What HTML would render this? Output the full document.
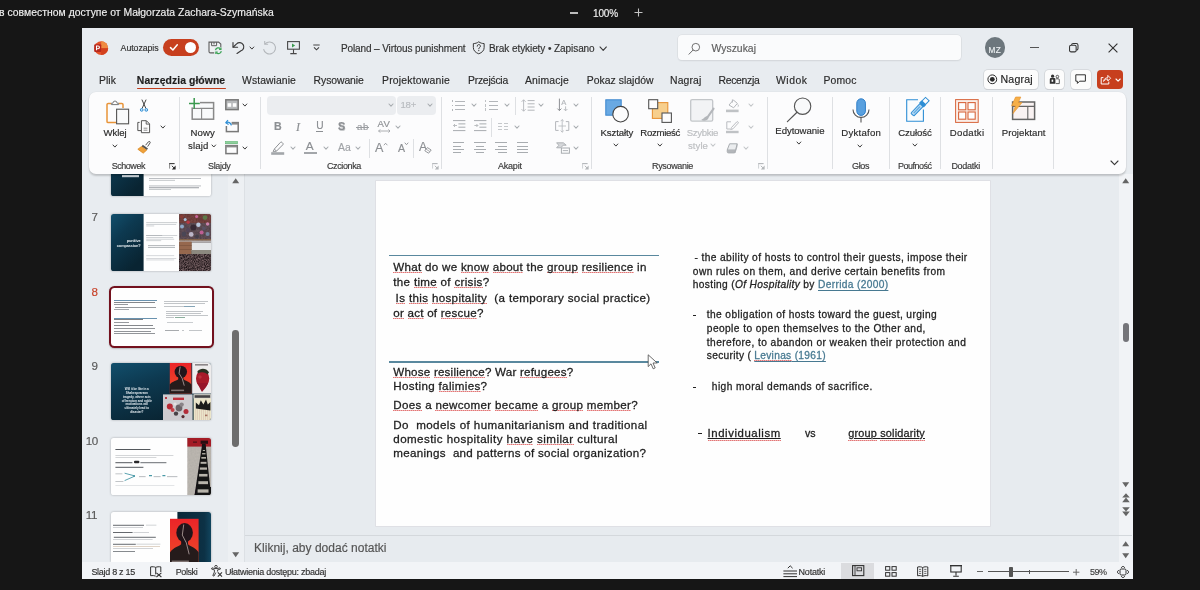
<!DOCTYPE html>
<html><head><meta charset="utf-8">
<style>
*{margin:0;padding:0;box-sizing:border-box}
html,body{width:1200px;height:590px;overflow:hidden;background:#161616}
body{font-family:"Liberation Sans",sans-serif;position:relative;color:#222}
.a{position:absolute}
.t{position:absolute;white-space:nowrap;line-height:1;-webkit-text-stroke-width:.16px}
svg{overflow:visible}
.w{background:linear-gradient(90deg,rgba(222,84,84,.8) 55%,rgba(222,84,84,.45) 55%) 0 100%/2px 1.2px repeat-x;padding-bottom:.4px}
.u{text-decoration:underline;text-decoration-thickness:.9px;text-underline-offset:.8px}
.w2{padding-bottom:1.8px}
.i{font-style:italic}
.lk{color:#487a92;text-decoration:underline;text-decoration-thickness:.8px;text-underline-offset:1.5px}
#root{position:absolute;left:0;top:0;width:1200px;height:590px;will-change:transform;opacity:.999}
</style></head><body><div id="root">
<div class="t" style="left:-1.0px;top:8px;font-size:10.4px;color:#f0f0f0;letter-spacing:0.024px;">в совместном доступе от Małgorzata Zachara-Szymańska</div>
<div class="a" style="left:570.0px;top:12.4px;width:8.4px;height:1.3px;background:#bdbdbd;"></div>
<div class="t" style="left:593.0px;top:9px;font-size:10px;color:#f0f0f0;letter-spacing:-0.144px;">100%</div>
<svg class="a" style="left:634.4px;top:8.4px;" width="9" height="9" viewBox="0 0 9 9" fill="none"><path d="M4.5 0.5V8.5M0.5 4.5H8.5" stroke="#c4c4c4" stroke-width="1.1"/></svg>
<div class="a" style="left:82.0px;top:28.0px;width:1050.6px;height:551.2px;background:#e9edf1;"></div>
<div class="a" style="left:245.0px;top:174.0px;width:887.0px;height:388.4px;background:#e8ecf0;"></div>
<div class="a" style="left:1119.0px;top:174.0px;width:13.6px;height:388.4px;background:#f2f4f7;"></div>
<div class="a" style="left:228.0px;top:174.0px;width:17.0px;height:388.4px;background:#eef1f4;"></div>
<div class="a" style="left:244.4px;top:174.0px;width:0.8px;height:388.4px;background:#dde1e5;"></div>
<svg class="a" width="0" height="0"><defs>
<linearGradient id="teal" x1="0" y1="0" x2=".55" y2="1"><stop offset="0" stop-color="#13506d"/><stop offset=".4" stop-color="#0e3a51"/><stop offset="1" stop-color="#0a2533"/></linearGradient>
<linearGradient id="redp" x1="0" y1="0" x2="0" y2="1"><stop offset="0" stop-color="#ec2529"/><stop offset=".55" stop-color="#ef3d2a"/><stop offset="1" stop-color="#e8572c"/></linearGradient>
<filter id="nz" color-interpolation-filters="sRGB" x="0" y="0" width="100%" height="100%"><feTurbulence type="fractalNoise" baseFrequency="1.1" numOctaves="2" seed="4"/><feColorMatrix type="matrix" values="0.7 0 0 0 -0.05  0.6 0 0 0 -0.06  0.6 0 0 0 -0.05  0 0 0 0 1"/><feGaussianBlur stdDeviation=".35"/></filter>
<filter id="nz2" color-interpolation-filters="sRGB" x="0" y="0" width="100%" height="100%"><feTurbulence type="fractalNoise" baseFrequency=".55" numOctaves="2" seed="9"/><feColorMatrix type="matrix" values="0.5 0 0 0 0.1  0.4 0 0 0 0.1  0.4 0 0 0 0.12  0 0 0 0 1"/></filter>
<filter id="b3"><feGaussianBlur stdDeviation=".35"/></filter>
<filter id="b6"><feGaussianBlur stdDeviation=".75"/></filter>
<clipPath id="r3"><rect x="0" y="0" width="100" height="57" rx="2.6"/></clipPath>
</defs></svg>
<svg class="a" style="left:111.1px;top:174px;filter:drop-shadow(0 .5px 1px rgba(0,0,0,.28));overflow:hidden;" width="100" height="22" viewBox="0 0 100 22"><g clip-path="url(#c6)"><defs><clipPath id="c6"><rect x="0" y="-10" width="100" height="32" rx="2.6"/></clipPath></defs><rect width="100" height="22" fill="#fff"/><rect y="-35" width="32.6" height="57" fill="url(#teal)"/><rect x="11" y="1" width="17" height="2.2" fill="#dfe7ec" opacity="0.9"/><rect x="38" y="4.2" width="52" height="0.7" fill="#9fa4a9" opacity="1"/><rect x="38" y="5.9" width="26" height="0.7" fill="#aeb3b7" opacity="1"/><rect x="38" y="11.6" width="52" height="0.7" fill="#9fa4a9" opacity="1"/><rect x="38" y="13.4" width="50" height="0.8" fill="#80858b" opacity="1"/><rect x="38" y="15.2" width="22" height="0.7" fill="#aeb3b7" opacity="1"/></g></svg>
<div class="t" style="left:91.6px;top:211px;font-size:11.6px;color:#5a5a5a;">7</div>
<div class="t" style="left:91.6px;top:286px;font-size:11.6px;color:#c9432a;">8</div>
<div class="t" style="left:91.6px;top:360px;font-size:11.6px;color:#5a5a5a;">9</div>
<div class="t" style="left:85.8px;top:435px;font-size:11.6px;color:#5a5a5a;letter-spacing:-0.452px;">10</div>
<div class="t" style="left:85.8px;top:509px;font-size:11.6px;color:#5a5a5a;letter-spacing:-0.321px;">11</div>
<svg class="a" style="left:111.1px;top:213.8px;filter:drop-shadow(0 .5px 1px rgba(0,0,0,.28));overflow:hidden;" width="100" height="57" viewBox="0 0 100 57"><g clip-path="url(#r3)"><rect width="100" height="57" fill="#fff"/><rect width="32.6" height="57" fill="url(#teal)"/><text x="29.6" y="28.2" font-size="3.9" font-weight="bold" fill="#e8eef2" text-anchor="end" font-family="Liberation Sans" letter-spacing="-.12">punitive</text><text x="29.6" y="33.4" font-size="3.9" font-weight="bold" fill="#e8eef2" text-anchor="end" font-family="Liberation Sans" letter-spacing="-.12">compassion?</text><rect x="35.2" y="8.4" width="31" height="0.7" fill="#b4b8bc" opacity="1"/><rect x="35.2" y="10" width="30" height="0.7" fill="#bfc3c7" opacity="1"/><rect x="35.2" y="11.6" width="8" height="0.7" fill="#bfc3c7" opacity="1"/><rect x="35.2" y="21.2" width="16" height="0.7" fill="#7f848a" opacity="1"/><rect x="35.2" y="21.2" width="31" height="0.7" fill="#bfc3c7" opacity="1"/><rect x="35.2" y="23.2" width="27" height="0.7" fill="#bfc3c7" opacity="1"/><rect x="35.2" y="24.8" width="28" height="0.7" fill="#bfc3c7" opacity="1"/><rect x="35.2" y="26.4" width="15" height="0.7" fill="#bfc3c7" opacity="1"/><rect x="37" y="31.4" width="27" height="0.7" fill="#8f9499" opacity="1"/><rect x="37" y="33.2" width="27" height="0.7" fill="#9da2a7" opacity="1"/><rect x="35.2" y="41.4" width="28" height="0.7" fill="#c6c9cd" opacity="1"/><rect x="35.2" y="44" width="30" height="0.7" fill="#c6c9cd" opacity="1"/><rect x="35.2" y="45.6" width="28" height="0.7" fill="#c6c9cd" opacity="1"/><g><rect x="68.2" y="0" width="31.8" height="26.4" fill="#5d4a52"/><rect x="68.2" y="0" width="31.8" height="9" fill="#7a3c34"/><rect x="68.2" y="0" width="31.8" height="26.4" filter="url(#nz2)" opacity=".3"/><g filter="url(#b6)"><circle cx="85.6" cy="2.4" r="1.5" fill="#c9659a"/><circle cx="96.6" cy="10" r="1.7" fill="#cf86b0"/><circle cx="90.6" cy="18.6" r="2.0" fill="#bf6094"/><circle cx="77.2" cy="8.2" r="1.7" fill="#b83a46"/><circle cx="74.2" cy="5.4" r="1.5" fill="#a9c3dd"/><circle cx="71" cy="12.4" r="2.0" fill="#8fa9c9"/><circle cx="87.4" cy="10.8" r="2.2" fill="#b9c7dc"/><circle cx="80.2" cy="20.4" r="2.4" fill="#bdb7c9"/><circle cx="82.4" cy="13.4" r="3" fill="#382c34"/><circle cx="73" cy="20" r="2.4" fill="#4b4656"/><circle cx="94" cy="3.6" r="2.4" fill="#5f7a48"/><circle cx="96.6" cy="20" r="2" fill="#76879f"/><circle cx="70.6" cy="2.6" r="1.6" fill="#8a3c36"/><circle cx="89" cy="5.6" r="2" fill="#6a3a3a"/><circle cx="77" cy="16" r="2.2" fill="#54465a"/><circle cx="93" cy="14.4" r="1.8" fill="#5a5266"/><circle cx="86" cy="22.4" r="2" fill="#45404c"/></g><rect x="68.2" y="25" width="31.8" height="1.5" fill="#8d6a48" opacity=".8"/></g><g><rect x="68.2" y="27.6" width="31.8" height="29.4" fill="#4a3d3e"/><rect x="80.4" y="28.4" width="19.6" height="8.6" fill="#e6e8ea"/><rect x="68.2" y="27.6" width="12.4" height="12.6" fill="#97694f"/><rect x="68.2" y="31" width="12.4" height="1" fill="#7d5540" opacity=".7"/><rect x="68.2" y="35" width="12.4" height="1" fill="#7d5540" opacity=".7"/><rect x="80.4" y="36" width="19.6" height="4.6" fill="#8d8a80" filter="url(#b3)"/><rect x="68.2" y="40" width="31.8" height="17" filter="url(#nz)"/></g></g></svg>
<div class="a" style="left:108.8px;top:286.2px;width:105px;height:61.8px;border-radius:5.5px;background:#fff;border:2.2px solid #74121f;box-shadow:0 .5px 1.5px rgba(0,0,0,.2)"><div class="a" style="left:3.4px;top:12.2px;width:43px;height:0.9px;background:#6a93b0"></div><div class="a" style="left:3.6px;top:14.2px;width:41px;height:0.8px;background:#85888c"></div><div class="a" style="left:3.6px;top:16px;width:14px;height:0.7px;background:#979a9e"></div><div class="a" style="left:4px;top:18.6px;width:41px;height:0.7px;background:#979a9e"></div><div class="a" style="left:3.6px;top:21.2px;width:15px;height:0.7px;background:#a5a8ac"></div><div class="a" style="left:3.4px;top:30px;width:43px;height:0.9px;background:#6a93b0"></div><div class="a" style="left:3.6px;top:31.2px;width:29px;height:0.8px;background:#7d8084"></div><div class="a" style="left:3.6px;top:33.4px;width:15px;height:0.7px;background:#979a9e"></div><div class="a" style="left:3.6px;top:36.4px;width:39px;height:0.8px;background:#85888c"></div><div class="a" style="left:3.6px;top:40.2px;width:41px;height:0.7px;background:#93969a"></div><div class="a" style="left:3.6px;top:42.6px;width:37px;height:0.7px;background:#93969a"></div><div class="a" style="left:3.6px;top:45px;width:41px;height:0.7px;background:#93969a"></div><div class="a" style="left:53.4px;top:12.6px;width:44px;height:0.6px;background:#c3c6c9"></div><div class="a" style="left:53px;top:15px;width:41px;height:0.6px;background:#c3c6c9"></div><div class="a" style="left:53px;top:17.8px;width:20px;height:0.6px;background:#c3c6c9"></div><div class="a" style="left:73px;top:17.8px;width:11.6px;height:0.8px;background:#86a5b7"></div><div class="a" style="left:55.2px;top:22.4px;width:37px;height:0.6px;background:#c3c6c9"></div><div class="a" style="left:55.2px;top:24.6px;width:35px;height:0.6px;background:#c3c6c9"></div><div class="a" style="left:55.2px;top:26.6px;width:42px;height:0.6px;background:#c3c6c9"></div><div class="a" style="left:55.2px;top:28.8px;width:8px;height:0.6px;background:#c3c6c9"></div><div class="a" style="left:64px;top:28.8px;width:10px;height:0.8px;background:#8db09e"></div><div class="a" style="left:56px;top:33.6px;width:26px;height:0.6px;background:#cbced1"></div><div class="a" style="left:54.6px;top:41.8px;width:13.6px;height:0.8px;background:#a9acaf"></div><div class="a" style="left:71.6px;top:41.8px;width:2px;height:0.6px;background:#c3c6c9"></div><div class="a" style="left:78.6px;top:41.8px;width:12.6px;height:0.7px;background:#c3c6c9"></div></div>
<svg class="a" style="left:111.1px;top:363px;filter:drop-shadow(0 .5px 1px rgba(0,0,0,.28));overflow:hidden;" width="100" height="57" viewBox="0 0 100 57"><g clip-path="url(#r3)"><rect width="100" height="57" fill="url(#teal)"/><text x="25.8" y="27.40" font-size="3.1" font-weight="bold" fill="#e3ebf0" text-anchor="middle" font-family="Liberation Sans" letter-spacing="-.05">Will it be like in a</text><text x="25.8" y="31.12" font-size="3.1" font-weight="bold" fill="#e3ebf0" text-anchor="middle" font-family="Liberation Sans" letter-spacing="-.05">Shakespearean</text><text x="25.8" y="34.84" font-size="3.1" font-weight="bold" fill="#e3ebf0" text-anchor="middle" font-family="Liberation Sans" letter-spacing="-.05">tragedy, where acts</text><text x="25.8" y="38.56" font-size="3.1" font-weight="bold" fill="#e3ebf0" text-anchor="middle" font-family="Liberation Sans" letter-spacing="-.05">of heroism and noble</text><text x="25.8" y="42.28" font-size="3.1" font-weight="bold" fill="#e3ebf0" text-anchor="middle" font-family="Liberation Sans" letter-spacing="-.05">motivations will</text><text x="25.8" y="46.00" font-size="3.1" font-weight="bold" fill="#e3ebf0" text-anchor="middle" font-family="Liberation Sans" letter-spacing="-.05">ultimately lead to</text><text x="25.8" y="49.72" font-size="3.1" font-weight="bold" fill="#e3ebf0" text-anchor="middle" font-family="Liberation Sans" letter-spacing="-.05">disaster?</text><rect x="58.8" y="0" width="21.6" height="30.6" fill="url(#redp)"/><g filter="url(#b3)"><ellipse cx="69.816" cy="8.874" rx="6.264" ry="6.120000000000001" fill="#24181c"/><rect x="67.224" y="12.852" width="5.184" height="4.896" fill="#24181c"/><path d="M58.8 30.6 V21.419999999999998 C60.959999999999994 18.36 65.49600000000001 17.748 67.656 15.912 H71.976 C74.136 17.748 78.24 18.36 80.4 21.419999999999998 V30.6Z" fill="#261b1f"/><path d="M69.168 3.672 L68.08800000000001 10.404000000000002 L71.11200000000001 15.3 L73.272 22.644000000000002" stroke="#e9d9d2" stroke-width=".7" fill="none" opacity=".85"/></g><rect x="60.096" y="26.622" width="12.96" height="1.5300000000000002" fill="#c9bcb8" opacity=".55"/><rect x="81.2" y="0" width="18.8" height="30.6" fill="#efeded"/><rect x="84" y="1.2" width="13" height="1.3" fill="#5a5052" opacity=".8"/><g filter="url(#b3)"><ellipse cx="91.6" cy="15.6" rx="6.6" ry="8.6" fill="#a81a2a"/><path d="M86 20c2 3 3 6 5 9 2-3 5-5 6-9Z" fill="#98172a"/><path d="M86.4 8.2c3-3.6 9-3.4 11.6 1l-1.4 2.2c-3-2.6-6.6-2.8-9.6-1Z" fill="#2c3324"/><circle cx="89" cy="14" r="1.8" fill="#c43a44" opacity=".7"/></g><rect x="52" y="31.4" width="29.6" height="25.6" fill="#cfcdd1"/><g filter="url(#b3)"><rect x="62" y="34.6" width="11" height="2.4" fill="#c2323c"/><circle cx="58.8" cy="43.4" r="3" fill="#b82a36"/><circle cx="61.6" cy="47" r="2" fill="#c4404a"/><circle cx="75" cy="48.6" r="2.5" fill="#b42d3a"/><circle cx="68" cy="45" r="3.4" fill="#6c6468"/><circle cx="70.6" cy="41.6" r="2.2" fill="#8a8488"/><circle cx="65" cy="50.6" r="2.2" fill="#4a4246"/><circle cx="72" cy="53.6" r="1.6" fill="#5a2a30"/><circle cx="64" cy="41" r="1.6" fill="#e6e2e4"/><rect x="54" y="34" width="2" height="2" fill="#b83a44"/></g><rect x="82.6" y="31.4" width="17.4" height="25.6" fill="#ece6cb"/><rect x="82.6" y="31.4" width="17.4" height="4" fill="#d8d6d2"/><rect x="83.6" y="32.2" width="15.6" height="2.6" fill="#2b2b2d" opacity=".85" filter="url(#b3)"/><rect x="84.6" y="46" width=".5" height="11" fill="#d7b9a8"/><rect x="86.5" y="46" width=".5" height="11" fill="#d7b9a8"/><rect x="88.4" y="46" width=".5" height="11" fill="#d7b9a8"/><rect x="90.3" y="46" width=".5" height="11" fill="#d7b9a8"/><rect x="92.2" y="46" width=".5" height="11" fill="#d7b9a8"/><rect x="94.1" y="46" width=".5" height="11" fill="#d7b9a8"/><rect x="96.0" y="46" width=".5" height="11" fill="#d7b9a8"/><rect x="97.9" y="46" width=".5" height="11" fill="#d7b9a8"/><path d="M84.8 45.6V39.4L88 42.2 89.8 37.2 92.4 41.6 95 36.4 96.8 41.4 99.4 39V47.6Z" fill="#1d1d1f" filter="url(#b3)"/><rect x="94" y="51.6" width="2.4" height="1.6" fill="#8a4a3a" opacity=".7"/></g></svg>
<svg class="a" style="left:111.1px;top:437.8px;filter:drop-shadow(0 .5px 1px rgba(0,0,0,.28));overflow:hidden;" width="100" height="57" viewBox="0 0 100 57"><g clip-path="url(#r3)"><rect width="100" height="57" fill="#fff"/><rect x="4.4" y="11" width="35" height="1" fill="#55595e" opacity="1"/><rect x="4.4" y="17.2" width="58" height="0.6" fill="#b9bcc0" opacity="1"/><rect x="4.4" y="19.4" width="41" height="0.6" fill="#b9bcc0" opacity="1"/><rect x="4.4" y="24.2" width="17" height="1" fill="#55595e" opacity="1"/><rect x="23" y="22.8" width="5.4" height="2.4" rx="1" fill="#2a2a2c"/><rect x="29.4" y="24.2" width="26" height="1" fill="#6a6e73" opacity="1"/><rect x="4.4" y="28.8" width="28" height="1" fill="#55595e" opacity="1"/><rect x="4.4" y="35.6" width="7" height="0.6" fill="#9a9fa4" opacity="1"/><rect x="4.4" y="43" width="8" height="0.6" fill="#9a9fa4" opacity="1"/><rect x="28" y="38.4" width="6.6" height="0.7" fill="#9a9fa4" opacity="1"/><rect x="42.6" y="38.4" width="7" height="0.7" fill="#9a9fa4" opacity="1"/><rect x="56" y="38.4" width="10.4" height="0.7" fill="#9a9fa4" opacity="1"/><rect x="4.4" y="47.4" width="59" height="0.5" fill="#c9ccd0" opacity="1"/><path d="M13.6 35.2L24 38 13.6 42.6" stroke="#4a9aa8" stroke-width=".9" fill="none"/><path d="M23 37v2" stroke="#4a9aa8" stroke-width="1.4"/><path d="M38 37.6h3M51.4 37.6h3" stroke="#4a9aa8" stroke-width="1.3"/><rect x="76.4" y="0" width="23.6" height="57" fill="#c7c3bb"/><rect x="76.4" y="0" width="23.6" height="57" filter="url(#nz2)" opacity=".12"/><rect x="76.4" y="0" width="23.6" height="8.6" fill="#a51d27"/><rect x="82" y="3.6" width="4" height="1" fill="#3a1216"/><rect x="89.6" y="2.6" width="7.4" height="3.2" fill="#2a1013"/><g filter="url(#b3)"><path d="M91.2 6H94.6L100 57H83.6Z" fill="#141214"/><path d="M83.6 57L85.4 49H100V57Z" fill="#141214"/><rect x="91.80" y="12.00" width="2.20" height="0.96" fill="#b9b5ac"/><rect x="91.06" y="15.10" width="3.45" height="1.30" fill="#b9b5ac"/><rect x="90.31" y="19.04" width="4.70" height="1.63" fill="#b9b5ac"/><rect x="89.57" y="23.82" width="5.95" height="1.97" fill="#b9b5ac"/><rect x="88.82" y="29.44" width="7.20" height="2.30" fill="#b9b5ac"/><rect x="88.08" y="35.90" width="8.45" height="2.64" fill="#b9b5ac"/><rect x="87.33" y="43.20" width="9.70" height="2.98" fill="#b9b5ac"/><rect x="86.59" y="51.34" width="10.95" height="3.31" fill="#b9b5ac"/></g></g></svg>
<svg class="a" style="left:111.1px;top:512.2px;filter:drop-shadow(0 .5px 1px rgba(0,0,0,.28));overflow:hidden;" width="100" height="50" viewBox="0 0 100 50"><g clip-path="url(#c11)"><defs><clipPath id="c11"><rect x="0" y="0" width="100" height="70" rx="2.6"/></clipPath><linearGradient id="t11g" x1="0" y1="0" x2="1" y2="0"><stop offset="0" stop-color="#0b2838"/><stop offset=".8" stop-color="#0d3246"/><stop offset="1" stop-color="#12465f"/></linearGradient></defs><rect width="100" height="50" fill="#fff"/><rect x="66.4" y="0" width="33.6" height="50" fill="url(#t11g)"/><rect x="2" y="12.8" width="31" height="0.9" fill="#55595e" opacity="1"/><rect x="35" y="12.8" width="10.4" height="0.6" fill="#b4b8bc" opacity="1"/><rect x="2" y="15.4" width="30" height="0.6" fill="#b4b8bc" opacity="1"/><rect x="2" y="20" width="19.6" height="0.9" fill="#55595e" opacity="1"/><rect x="22.4" y="20" width="15.6" height="0.6" fill="#b4b8bc" opacity="1"/><rect x="2.8" y="24.8" width="42" height="0.9" fill="#55595e" opacity="1"/><rect x="2" y="27" width="39.6" height="0.6" fill="#b4b8bc" opacity="1"/><rect x="2" y="31.8" width="22.8" height="0.9" fill="#55595e" opacity="1"/><rect x="25.4" y="31.8" width="24" height="0.6" fill="#b4b8bc" opacity="1"/><rect x="2" y="34" width="47" height="0.6" fill="#cdb9a4" opacity="1"/><rect x="2" y="36.2" width="40" height="0.6" fill="#b4b8bc" opacity="1"/><rect x="2" y="39" width="22" height="0.8" fill="#6a6e73" opacity="1"/><rect x="59" y="6.8" width="28.6" height="48" fill="url(#redp)"/><g filter="url(#b3)"><ellipse cx="73.586" cy="20.72" rx="8.294" ry="9.600000000000001" fill="#24181c"/><rect x="70.154" y="26.96" width="6.864" height="7.68" fill="#24181c"/><path d="M59 54.8 V40.39999999999999 C61.86 35.599999999999994 67.866 34.63999999999999 70.726 31.76 H76.446 C79.306 34.63999999999999 84.74000000000001 35.599999999999994 87.6 40.39999999999999 V54.8Z" fill="#261b1f"/><path d="M72.728 12.559999999999999 L71.298 23.12 L75.30199999999999 30.8 L78.162 42.31999999999999" stroke="#e9d9d2" stroke-width=".7" fill="none" opacity=".85"/></g><rect x="60.716" y="48.559999999999995" width="17.16" height="2.4000000000000004" fill="#c9bcb8" opacity=".55"/></g></svg>
<svg class="a" style="left:231.6px;top:178.4px;" width="7.4" height="5.6" viewBox="0 0 7.4 5.6" fill="none"><path d="M3.7 0.3L7.2 5.3H0.2Z" fill="#666"/></svg>
<div class="a" style="left:231.8px;top:330.0px;width:6.8px;height:116.6px;background:#6e6e6e;border-radius:3.4px"></div>
<svg class="a" style="left:231.6px;top:552.4px;" width="7.4" height="5.6" viewBox="0 0 7.4 5.6" fill="none"><path d="M0.2 0.3H7.2L3.7 5.3Z" fill="#666"/></svg>
<div class="a" style="left:375.5px;top:181.0px;width:614.0px;height:345.0px;background:#fff;box-shadow:0 0 0 .7px #dddde1"></div>
<div class="a" style="left:389.0px;top:254.7px;width:270.0px;height:1.3px;background:#5a899f;"></div>
<div class="a" style="left:389.0px;top:361.3px;width:270.0px;height:1.4px;background:#5a899f;"></div>
<div class="t" style="left:393.3px;top:261px;font-size:11.6px;color:#1e1e1e;letter-spacing:0.288px;white-space:pre;-webkit-text-stroke-width:.28px;"><span class="w">What</span> do we <span class="w">know</span> <span class="w">about</span> the <span class="w">group</span> <span class="w">resilience</span> in</div>
<div class="t" style="left:393.3px;top:276px;font-size:11.6px;color:#1e1e1e;letter-spacing:0.313px;white-space:pre;-webkit-text-stroke-width:.28px;">the <span class="w">time</span> of <span class="w">crisis</span>?</div>
<div class="t" style="left:395.6px;top:292px;font-size:11.6px;color:#1e1e1e;letter-spacing:0.342px;white-space:pre;-webkit-text-stroke-width:.28px;"><span class="w">Is</span> <span class="w">this</span> <span class="w">hospitality</span>  (a temporary social practice)</div>
<div class="t" style="left:393.3px;top:307px;font-size:11.6px;color:#1e1e1e;letter-spacing:0.229px;white-space:pre;-webkit-text-stroke-width:.28px;"><span class="w">or</span> <span class="w">act</span> of <span class="w">rescue</span>?</div>
<div class="t" style="left:393.3px;top:366px;font-size:11.6px;color:#1e1e1e;letter-spacing:0.211px;white-space:pre;-webkit-text-stroke-width:.28px;"><span class="w">Whose</span> <span class="w">resilience</span>? War <span class="w">refugees</span>?</div>
<div class="t" style="left:393.3px;top:380px;font-size:11.6px;color:#1e1e1e;letter-spacing:0.340px;white-space:pre;-webkit-text-stroke-width:.28px;">Hosting <span class="w">falimies</span>?</div>
<div class="t" style="left:393.3px;top:399px;font-size:11.6px;color:#1e1e1e;letter-spacing:0.314px;white-space:pre;-webkit-text-stroke-width:.28px;"><span class="w">Does</span> a <span class="w">newcomer</span> <span class="w">became</span> a <span class="w">group</span> <span class="w">member</span>?</div>
<div class="t" style="left:393.3px;top:419px;font-size:11.6px;color:#1e1e1e;letter-spacing:0.409px;white-space:pre;-webkit-text-stroke-width:.28px;">Do  models of humanitarianism and traditional</div>
<div class="t" style="left:393.3px;top:433px;font-size:11.6px;color:#1e1e1e;letter-spacing:0.423px;white-space:pre;-webkit-text-stroke-width:.28px;">domestic hospitality <span class="w">have</span> <span class="w">similar</span> cultural</div>
<div class="t" style="left:393.3px;top:447px;font-size:11.6px;color:#1e1e1e;letter-spacing:0.287px;white-space:pre;-webkit-text-stroke-width:.28px;">meanings  and patterns of social organization?</div>
<div class="t" style="left:694.4px;top:253px;font-size:10.2px;color:#242424;letter-spacing:0.402px;white-space:pre;-webkit-text-stroke-width:.28px;">- the ability of hosts to control their guests, impose their</div>
<div class="t" style="left:692.8px;top:267px;font-size:10.2px;color:#242424;letter-spacing:0.414px;white-space:pre;-webkit-text-stroke-width:.28px;">own rules on them, and derive certain benefits from</div>
<div class="t" style="left:692.8px;top:280px;font-size:10.2px;color:#242424;letter-spacing:0.337px;white-space:pre;-webkit-text-stroke-width:.28px;">hosting (<span class="i">Of Hospitality</span> by <span class="lk">Derrida (2000)</span></div>
<div class="a" style="left:692.8px;top:315.0px;width:3.2px;height:1.0px;background:#242424;"></div>
<div class="t" style="left:706.8px;top:310px;font-size:10.2px;color:#242424;letter-spacing:0.396px;white-space:pre;-webkit-text-stroke-width:.28px;">the obligation of hosts toward the guest, urging</div>
<div class="t" style="left:706.8px;top:324px;font-size:10.2px;color:#242424;letter-spacing:0.416px;white-space:pre;-webkit-text-stroke-width:.28px;">people to open themselves to the Other and,</div>
<div class="t" style="left:706.8px;top:338px;font-size:10.2px;color:#242424;letter-spacing:0.427px;white-space:pre;-webkit-text-stroke-width:.28px;">therefore, to abandon or weaken their protection and</div>
<div class="t" style="left:706.8px;top:351px;font-size:10.2px;color:#242424;letter-spacing:0.301px;white-space:pre;-webkit-text-stroke-width:.28px;">security ( <span class="lk w">Levinas</span><span class="lk"> (1961)</span></div>
<div class="a" style="left:692.8px;top:386.6px;width:3.2px;height:1.0px;background:#242424;"></div>
<div class="t" style="left:711.8px;top:382px;font-size:10.2px;color:#242424;letter-spacing:0.446px;white-space:pre;-webkit-text-stroke-width:.28px;">high moral demands of sacrifice.</div>
<div class="a" style="left:698.0px;top:433.2px;width:3.6px;height:1.1px;background:#1e1e1e;"></div>
<div class="t" style="left:707.6px;top:428px;font-size:11.4px;color:#1e1e1e;letter-spacing:0.562px;white-space:pre;-webkit-text-stroke-width:.28px;"><span class="w w2 u">Individualism</span></div>
<div class="t" style="left:805.0px;top:428px;font-size:10.6px;color:#1e1e1e;letter-spacing:0.000px;white-space:pre;-webkit-text-stroke-width:.28px;">vs</div>
<div class="t" style="left:848.3px;top:428px;font-size:10.9px;color:#1e1e1e;letter-spacing:0.174px;white-space:pre;-webkit-text-stroke-width:.28px;"><span class="w w2 u">group</span><span class="u"> </span><span class="w w2 u">solidarity</span></div>
<svg class="a" style="left:646.6px;top:354.4px;" width="13" height="17" viewBox="0 0 13 17" fill="none"><path d="M1.2 0.8V12.6L4 9.8 6.2 14.8 8.2 13.9 6 9H10.2Z" fill="#fff" stroke="#4a4a4a" stroke-width=".8" stroke-linejoin="round"/></svg>
<svg class="a" style="left:1122.4px;top:178.4px;" width="7.4" height="5.6" viewBox="0 0 7.4 5.6" fill="none"><path d="M3.7 0.3L7.2 5.3H0.2Z" fill="#666"/></svg>
<div class="a" style="left:1122.8px;top:323.2px;width:6.4px;height:19.0px;background:#75757a;border-radius:3.2px"></div>
<svg class="a" style="left:1122.4px;top:481.6px;" width="7.4" height="5.6" viewBox="0 0 7.4 5.6" fill="none"><path d="M0.2 0.3H7.2L3.7 5.3Z" fill="#666"/></svg>
<svg class="a" style="left:1122.0px;top:493.4px;" width="8" height="9.6" viewBox="0 0 8 9.6" fill="none"><path d="M4 0.2L7.8 4.6H0.2Z M4 4.6L7.8 9.2H0.2Z" fill="#666"/></svg>
<svg class="a" style="left:1122.0px;top:506.6px;" width="8" height="9.6" viewBox="0 0 8 9.6" fill="none"><path d="M0.2 0.2H7.8L4 4.6Z M0.2 4.6H7.8L4 9.2Z" fill="#666"/></svg>
<div class="a" style="left:245.0px;top:535.0px;width:887.0px;height:0.9px;background:#d5d9dd;"></div>
<div class="t" style="left:254.0px;top:542px;font-size:12px;color:#555;letter-spacing:0.016px;">Kliknij, aby dodać notatki</div>
<svg class="a" style="left:1122.4px;top:541.0px;" width="7.4" height="5.6" viewBox="0 0 7.4 5.6" fill="none"><path d="M3.7 0.3L7.2 5.3H0.2Z" fill="#666"/></svg>
<svg class="a" style="left:1122.4px;top:553.2px;" width="7.4" height="5.6" viewBox="0 0 7.4 5.6" fill="none"><path d="M0.2 0.3H7.2L3.7 5.3Z" fill="#666"/></svg>
<div class="a" style="left:82.0px;top:562.0px;width:1050.6px;height:17.2px;background:#f3f5f8;"></div>
<div class="t" style="left:91.4px;top:568px;font-size:9px;color:#333;letter-spacing:-0.286px;">Slajd 8 z 15</div>
<svg class="a" style="left:150.4px;top:566.0px;" width="12" height="11.5" viewBox="0 0 12 11.5" fill="none"><path d="M5.7 1.4C4.4.7 2.4.6 0.6.9V9.7c1.8-.3 3.6-.2 5.1.4" stroke="#333" stroke-width="1"/><path d="M5.7 1.4V8.4M5.7 1.4C7 .7 9 .6 10.8.9V6" stroke="#333" stroke-width="1"/><path d="M6.4 6.8L11.4 11M11.4 6.8L6.4 11" stroke="#333" stroke-width="1.05"/></svg>
<div class="t" style="left:175.8px;top:568px;font-size:9px;color:#333;letter-spacing:-0.435px;">Polski</div>
<svg class="a" style="left:210.6px;top:565.2px;" width="12" height="12" viewBox="0 0 12 12" fill="none"><circle cx="5" cy="1.7" r="1.3" stroke="#333" stroke-width=".9"/><path d="M5 3.6C3.6 3.6 2.2 3.3 1 2.8L0.5 4C1.6 4.5 2.6 4.7 3.4 4.8V7L1.8 10.6 3 11.1 4.8 7.6" stroke="#333" stroke-width=".9" stroke-linejoin="round"/><path d="M5 3.6C6.4 3.6 7.8 3.3 9 2.8L9.5 4C8.4 4.5 7.4 4.7 6.6 4.8V6.6" stroke="#333" stroke-width=".9" stroke-linejoin="round"/><path d="M6.8 7.4L11 11.6M11 7.4L6.8 11.6" stroke="#333" stroke-width="1.05"/></svg>
<div class="t" style="left:225.0px;top:568px;font-size:9px;color:#333;letter-spacing:-0.253px;">Ułatwienia dostępu: zbadaj</div>
<svg class="a" style="left:782.6px;top:565.0px;" width="14.5" height="13" viewBox="0 0 14.5 13" fill="none"><path d="M4.8 3.2L7.2 0.8 9.6 3.2" stroke="#333" stroke-width="1"/><path d="M0.4 6H14M0.4 8.8H14M0.4 11.6H14" stroke="#333" stroke-width="1"/></svg>
<div class="t" style="left:798.6px;top:568px;font-size:9px;color:#333;letter-spacing:-0.230px;">Notatki</div>
<div class="a" style="left:840.6px;top:562.6px;width:33.2px;height:16.4px;background:#dcdde0;"></div>
<svg class="a" style="left:851.6px;top:565.4px;" width="12.5" height="11.5" viewBox="0 0 12.5 11.5" fill="none"><rect x="0.6" y="0.6" width="11.2" height="10" stroke="#333" stroke-width="1.1"/><path d="M3 0.6V10.6" stroke="#333" stroke-width=".9"/><rect x="5" y="2.8" width="4.6" height="3" stroke="#333" stroke-width=".9"/></svg>
<svg class="a" style="left:884.6px;top:565.8px;" width="12" height="11" viewBox="0 0 12 11" fill="none"><rect x="0.6" y="0.6" width="4.2" height="3.6" stroke="#333" stroke-width="1"/><rect x="7" y="0.6" width="4.2" height="3.6" stroke="#333" stroke-width="1"/><rect x="0.6" y="6.6" width="4.2" height="3.6" stroke="#333" stroke-width="1"/><rect x="7" y="6.6" width="4.2" height="3.6" stroke="#333" stroke-width="1"/></svg>
<svg class="a" style="left:916.8px;top:565.6px;" width="11.5" height="11.5" viewBox="0 0 11.5 11.5" fill="none"><path d="M5.7 1.6C4.4.7 2.4.6 0.6 1V9.8c1.8-.4 3.8-.3 5.1.6 1.3-.9 3.3-1 5.1-.6V1C9 .6 7 .7 5.7 1.6ZM5.7 1.6V10.4" stroke="#333" stroke-width="1"/><path d="M2 3.4H4.2M2 5.4H4.2M2 7.4H4.2M7.2 3.4H9.4M7.2 5.4H9.4M7.2 7.4H9.4" stroke="#333" stroke-width=".7"/></svg>
<svg class="a" style="left:949.6px;top:565.4px;" width="12" height="12" viewBox="0 0 12 12" fill="none"><rect x="0.8" y="0.6" width="10.4" height="6.4" stroke="#333" stroke-width="1.1"/><path d="M0 0.6H12M6 7V10.6M3.2 11.2H8.8" stroke="#333" stroke-width="1.1"/></svg>
<div class="a" style="left:977.0px;top:571.2px;width:5.6px;height:1.0px;background:#666;"></div>
<div class="a" style="left:988.0px;top:571.2px;width:81.0px;height:1.0px;background:#555;"></div>
<div class="a" style="left:1008.8px;top:566.8px;width:3.8px;height:9.8px;background:#555;border-radius:.8px"></div>
<div class="a" style="left:1028.6px;top:569.6px;width:1.0px;height:4.2px;background:#555;"></div>
<svg class="a" style="left:1073.4px;top:568.6px;" width="6.4" height="6.4" viewBox="0 0 6.4 6.4" fill="none"><path d="M3.2 0V6.4M0 3.2H6.4" stroke="#666" stroke-width="1"/></svg>
<div class="t" style="left:1090.0px;top:568px;font-size:9px;color:#444;letter-spacing:-0.471px;">59%</div>
<svg class="a" style="left:1117.4px;top:565.6px;" width="12" height="12" viewBox="0 0 12 12" fill="none"><rect x="3" y="3" width="6" height="6" rx="1.2" stroke="#333" stroke-width="1"/><path d="M4 1.8L6 0.2 8 1.8M4 10.2L6 11.8 8 10.2M1.8 4L0.2 6 1.8 8M10.2 4L11.8 6 10.2 8" stroke="#333" stroke-width=".9"/></svg>
<svg class="a" style="left:94.4px;top:40.6px;" width="14.4" height="14.4" viewBox="0 0 14.4 14.4" fill="none"><circle cx="7.2" cy="7.2" r="6.9" fill="#e5532a"/>
<path d="M7.2 0.3A6.9 6.9 0 0 1 14.1 7.2H7.2Z" fill="#f08c42"/>
<path d="M7.2 7.2H14.1A6.9 6.9 0 0 1 7.2 14.1Z" fill="#d4421f"/>
<rect x="0.2" y="3.2" width="7" height="7.8" rx="1" fill="#b92a1e"/>
<path d="M2.5 9.3V5h1.6a1.35 1.35 0 0 1 0 2.7H2.5" stroke="#fff" stroke-width="1.05" fill="none"/></svg>
<div class="t" style="left:120.6px;top:44px;font-size:8.8px;color:#333;letter-spacing:-0.072px;">Autozapis</div>
<div class="a" style="left:163.3px;top:39.3px;width:36.2px;height:16.4px;background:#c8401f;border-radius:9px"></div>
<svg class="a" style="left:169.0px;top:43.0px;" width="10" height="9" viewBox="0 0 10 9" fill="none"><path d="M1.5 4.6 L3.9 7 L8.3 1.8" stroke="#fff" stroke-width="1.5" stroke-linecap="round" stroke-linejoin="round"/></svg>
<div class="a" style="left:184.6px;top:41.6px;width:11.4px;height:11.4px;background:#fff;border-radius:50%"></div>
<svg class="a" style="left:208.0px;top:41.0px;" width="15" height="13" viewBox="0 0 15 13" fill="none"><path d="M1 1.1h9.6l2.2 2V11.9H2.4A1.4 1.4 0 0 1 1 10.5Z" stroke="#5e5e5e" stroke-width="1.1" fill="#f0f2f4"/>
<path d="M3.6 1.1v3.6h5V1.1M6 1.2V3.4" stroke="#5e5e5e" stroke-width="1"/>
<rect x="6.2" y="6.2" width="8.4" height="7" fill="#e9edf1"/>
<path d="M7.5 9.2a2.8 2.8 0 0 1 5-1.3M13.3 10.2a2.8 2.8 0 0 1-5 1.3" stroke="#3ca455" stroke-width="1.25"/>
<path d="M13 6.5v1.9h-1.9M7.8 12.9v-1.9h1.9" stroke="#3ca455" stroke-width="1.05"/></svg>
<svg class="a" style="left:232.0px;top:41.0px;" width="13" height="13" viewBox="0 0 13 13" fill="none"><path d="M1 1.6v4.6h4.6" stroke="#3a3a3a" stroke-width="1.15" stroke-linecap="round" stroke-linejoin="round"/>
<path d="M1.3 6 L4.6 2.9 a4.2 4.2 0 1 1 4.4 6.9 L5 12.4" stroke="#3a3a3a" stroke-width="1.15" stroke-linecap="round" stroke-linejoin="round"/></svg>
<svg class="a" style="left:249.1px;top:46.0px;" width="5.8" height="4.1" viewBox="0 0 5.8 4.1" fill="none"><path d="M1 1 L2.9 3.1 L4.8 1" stroke="#3a3a3a" stroke-width="1.0" stroke-linecap="round" stroke-linejoin="round"/></svg>
<svg class="a" style="left:262.4px;top:39.5px;" width="15" height="15" viewBox="0 0 15 15" fill="none"><path d="M3.04 3.99A6 6 0 1 1 1.59 9.04" stroke="#b4b8bc" stroke-width="1.1"/>
<path d="M2.7 0.9V4.3H6.1" stroke="#b4b8bc" stroke-width="1.05"/></svg>
<svg class="a" style="left:287.0px;top:41.0px;" width="13" height="13.5" viewBox="0 0 13 13.5" fill="none"><rect x="0.6" y="0.6" width="11.8" height="7.6" stroke="#4a4a4a" stroke-width="1.1"/>
<path d="M5 2.4v4l3.2-2Z" fill="#3c9b50"/>
<path d="M6.5 8.2v4M3.3 12.6h6.4" stroke="#4a4a4a" stroke-width="1.1"/></svg>
<svg class="a" style="left:313.4px;top:43.6px;" width="7" height="7" viewBox="0 0 7 7" fill="none"><path d="M0.3 1h6.4" stroke="#444" stroke-width="1"/><path d="M1 3.3 L3.5 5.8 L6 3.3" stroke="#444" stroke-width="1.1"/></svg>
<div class="t" style="left:341.0px;top:44px;font-size:10px;color:#333;letter-spacing:-0.118px;">Poland – Virtous punishment</div>
<svg class="a" style="left:472.0px;top:41.2px;" width="13.5" height="13.5" viewBox="0 0 13.5 13.5" fill="none"><path d="M6.75 0.8c1.7 1.3 3.4 1.7 5.4 1.8v4c0 3-2.2 5-5.4 6.2C3.55 11.6 1.35 9.6 1.35 6.6v-4c2-.1 3.7-.5 5.4-1.8Z" stroke="#3a3a3a" stroke-width="1"/>
<path d="M5.2 5.2a1.6 1.6 0 1 1 2.3 1.4c-.5.3-.75.6-.75 1.2" stroke="#3a3a3a" stroke-width="1" stroke-linecap="round"/><circle cx="6.75" cy="9.6" r=".65" fill="#3a3a3a"/></svg>
<div class="t" style="left:489.0px;top:44px;font-size:10px;color:#333;letter-spacing:-0.077px;">Brak etykiety • Zapisano</div>
<svg class="a" style="left:598.8px;top:45.9px;" width="8.4" height="5.4" viewBox="0 0 8.4 5.4" fill="none"><path d="M1 1 L4.2 4.4 L7.4 1" stroke="#3a3a3a" stroke-width="1.1" stroke-linecap="round" stroke-linejoin="round"/></svg>
<div class="a" style="left:678.0px;top:34.9px;width:282.5px;height:25.2px;background:#fbfcfd;border-radius:4px;box-shadow:0 0 0 .6px #d9dce0,0 1px 1.5px rgba(0,0,0,.10)"></div>
<svg class="a" style="left:688.0px;top:42.0px;" width="13" height="13" viewBox="0 0 13 13" fill="none"><circle cx="7.8" cy="5.2" r="3.8" stroke="#6a6a6a" stroke-width=".95"/><path d="M5 8.1 L1 12.2" stroke="#6a6a6a" stroke-width="1" stroke-linecap="round"/></svg>
<div class="t" style="left:711.5px;top:44px;font-size:10.4px;color:#5f5f5f;letter-spacing:0.012px;">Wyszukaj</div>
<div class="a" style="left:984.8px;top:37.4px;width:20.2px;height:20.2px;background:#6e787e;border-radius:50%"></div>
<div class="t" style="left:988.6px;top:47px;font-size:8.2px;color:#eef2f4;letter-spacing:0.280px;">MZ</div>
<div class="a" style="left:1029.5px;top:46.8px;width:9.0px;height:1.1px;background:#555;"></div>
<svg class="a" style="left:1069.0px;top:43.0px;" width="9.6" height="9.6" viewBox="0 0 9.6 9.6" fill="none"><rect x="0.55" y="2.3" width="6.6" height="6.6" rx="1.5" stroke="#333" stroke-width="1.05"/><path d="M2.6 2.1V2A1.5 1.5 0 0 1 4.1 0.55H7.4A1.6 1.6 0 0 1 9 2.15V5.5A1.5 1.5 0 0 1 7.5 7H7.3" stroke="#333" stroke-width="1.05"/></svg>
<svg class="a" style="left:1108.0px;top:42.5px;" width="10" height="10" viewBox="0 0 10 10" fill="none"><path d="M0.6 0.6L9.4 9.4M9.4 0.6L0.6 9.4" stroke="#333" stroke-width="1.15"/></svg>
<div class="t" style="left:99.0px;top:76px;font-size:10.4px;color:#2b2b2b;letter-spacing:0.060px;">Plik</div>
<div class="t" style="left:136.8px;top:76px;font-size:10.4px;color:#1f1f1f;letter-spacing:0.077px;font-weight:bold;">Narzędzia główne</div>
<div class="a" style="left:136.8px;top:87.8px;width:89.0px;height:1.6px;background:#c23e1d;border-radius:1px"></div>
<div class="t" style="left:242.0px;top:76px;font-size:10.4px;color:#2b2b2b;letter-spacing:0.083px;">Wstawianie</div>
<div class="t" style="left:313.6px;top:76px;font-size:10.4px;color:#2b2b2b;letter-spacing:-0.074px;">Rysowanie</div>
<div class="t" style="left:382.0px;top:76px;font-size:10.4px;color:#2b2b2b;letter-spacing:0.206px;">Projektowanie</div>
<div class="t" style="left:468.0px;top:76px;font-size:10.4px;color:#2b2b2b;letter-spacing:-0.243px;">Przejścia</div>
<div class="t" style="left:525.0px;top:76px;font-size:10.4px;color:#2b2b2b;letter-spacing:0.153px;">Animacje</div>
<div class="t" style="left:586.7px;top:76px;font-size:10.4px;color:#2b2b2b;letter-spacing:0.040px;">Pokaz slajdów</div>
<div class="t" style="left:670.0px;top:76px;font-size:10.4px;color:#2b2b2b;letter-spacing:0.144px;">Nagraj</div>
<div class="t" style="left:718.5px;top:76px;font-size:10.4px;color:#2b2b2b;letter-spacing:-0.295px;">Recenzja</div>
<div class="t" style="left:776.0px;top:76px;font-size:10.4px;color:#2b2b2b;letter-spacing:0.521px;">Widok</div>
<div class="t" style="left:823.5px;top:76px;font-size:10.4px;color:#2b2b2b;letter-spacing:0.126px;">Pomoc</div>
<div class="a" style="left:984.0px;top:69.6px;width:54.2px;height:19.6px;background:#fdfdfd;border-radius:4px;box-shadow:0 0 0 .8px #d2d5d9,0 1px .5px #c2c5c9"></div>
<svg class="a" style="left:987.4px;top:74.0px;" width="11" height="11" viewBox="0 0 11 11" fill="none"><circle cx="5.3" cy="5.3" r="4.4" stroke="#2b2b2b" stroke-width="1"/><circle cx="5.3" cy="5.3" r="2.4" fill="#2b2b2b"/></svg>
<div class="t" style="left:1000.5px;top:74px;font-size:10.6px;color:#1f1f1f;letter-spacing:0.179px;">Nagraj</div>
<div class="a" style="left:1044.6px;top:69.6px;width:19.6px;height:19.6px;background:#fdfdfd;border-radius:4px;box-shadow:0 0 0 .8px #d2d5d9,0 1px .5px #c2c5c9"></div>
<svg class="a" style="left:1049.0px;top:73.6px;" width="11" height="11" viewBox="0 0 11 11" fill="none"><circle cx="3.6" cy="2.2" r="1.6" fill="#333"/><path d="M0.8 5.2a1.2 1.2 0 0 1 1.2-1.2h3.2a1.2 1.2 0 0 1 1.2 1.2V9.8H0.8Z" fill="#333"/>
<circle cx="8.4" cy="2.6" r="1.3" stroke="#333" stroke-width=".8"/><path d="M6.9 4.8h2.4a1 1 0 0 1 1 1V9.6H6.9" stroke="#333" stroke-width=".8"/><rect x="2.6" y="5.6" width="1.6" height="2.2" fill="#fdfdfd"/></svg>
<div class="a" style="left:1071.2px;top:69.6px;width:19.6px;height:19.6px;background:#fdfdfd;border-radius:4px;box-shadow:0 0 0 .8px #d2d5d9,0 1px .5px #c2c5c9"></div>
<svg class="a" style="left:1075.4px;top:74.4px;" width="11.5" height="10.5" viewBox="0 0 11.5 10.5" fill="none"><path d="M0.8 0.8h9.6v6.4H4.6L2.4 9.4V7.2H0.8Z" stroke="#333" stroke-width="1" stroke-linejoin="round"/></svg>
<div class="a" style="left:1097.2px;top:69.6px;width:25.8px;height:19.6px;background:#c8401f;border-radius:4px"></div>
<svg class="a" style="left:1100.4px;top:74.0px;" width="11" height="11" viewBox="0 0 11 11" fill="none"><path d="M3.4 3.6H1.2V10h7.6V7.6" stroke="#fff" stroke-width="1" stroke-linejoin="round"/><path d="M3.6 7.4c.3-2.4 1.7-3.6 4.2-3.7V1.4L10.6 4.2 7.8 7V5.1C6 5.1 4.6 5.8 3.6 7.4Z" stroke="#fff" stroke-width=".9" stroke-linejoin="round"/></svg>
<svg class="a" style="left:1114.5px;top:77.5px;" width="6.2" height="4.2" viewBox="0 0 6.2 4.2" fill="none"><path d="M1 1 L3.1 3.2 L5.2 1" stroke="#fff" stroke-width="1.1" stroke-linecap="round" stroke-linejoin="round"/></svg>
<div class="a" style="left:88.6px;top:92.4px;width:1037.4px;height:81.4px;background:#fdfdfe;border-radius:7px;box-shadow:0 1.2px 1.8px rgba(0,0,0,.17),0 0 0 .5px rgba(0,0,0,.03)"></div>
<div class="a" style="left:179.0px;top:96.5px;width:1.0px;height:72.0px;background:#dfe1e4;"></div>
<div class="a" style="left:260.0px;top:96.5px;width:1.0px;height:72.0px;background:#dfe1e4;"></div>
<div class="a" style="left:441.2px;top:96.5px;width:1.0px;height:72.0px;background:#dfe1e4;"></div>
<div class="a" style="left:590.5px;top:96.5px;width:1.0px;height:72.0px;background:#dfe1e4;"></div>
<div class="a" style="left:767.0px;top:96.5px;width:1.0px;height:72.0px;background:#dfe1e4;"></div>
<div class="a" style="left:831.5px;top:96.5px;width:1.0px;height:72.0px;background:#dfe1e4;"></div>
<div class="a" style="left:888.5px;top:96.5px;width:1.0px;height:72.0px;background:#dfe1e4;"></div>
<div class="a" style="left:940.0px;top:96.5px;width:1.0px;height:72.0px;background:#dfe1e4;"></div>
<div class="a" style="left:992.1px;top:96.5px;width:1.0px;height:72.0px;background:#dfe1e4;"></div>
<div class="a" style="left:1053.1px;top:96.5px;width:1.0px;height:72.0px;background:#dfe1e4;"></div>
<svg class="a" style="left:105.5px;top:99.7px;" width="24" height="25" viewBox="0 0 24 25" fill="none"><path d="M5.2 3.4H2.2A1.2 1.2 0 0 0 1 4.6V21.4A1.2 1.2 0 0 0 2.2 22.6H10" stroke="#e9953a" stroke-width="1.5"/>
<path d="M12.8 3.4h3A1.2 1.2 0 0 1 17 4.6V8" stroke="#e9953a" stroke-width="1.5"/>
<path d="M5.4 4.6V3.2h1.5A2.2 2.2 0 0 1 9 1a2.2 2.2 0 0 1 2.1 2.2h1.5V4.6Z" stroke="#7a7a7a" stroke-width="1" fill="#fdfdfe"/>
<rect x="10.6" y="9.2" width="12" height="14.6" stroke="#555" stroke-width="1.1" fill="#fafbfc"/></svg>
<div class="t" style="left:103.4px;top:128px;font-size:9.6px;color:#2b2b2b;letter-spacing:-0.053px;">Wklej</div>
<svg class="a" style="left:111.8px;top:143.9px;" width="5.8" height="4.1" viewBox="0 0 5.8 4.1" fill="none"><path d="M1 1 L2.9 3.1 L4.8 1" stroke="#3a3a3a" stroke-width="1.0" stroke-linecap="round" stroke-linejoin="round"/></svg>
<svg class="a" style="left:138.6px;top:99.0px;" width="10" height="13" viewBox="0 0 10 13" fill="none"><path d="M2.9 0.6L6.9 9.4M7.1 0.6L3.1 9.4" stroke="#3a3a3a" stroke-width=".95"/>
<circle cx="2.7" cy="10.9" r="1.35" stroke="#2f8fd6" stroke-width="1" fill="#cfe6f7"/><circle cx="7.3" cy="10.9" r="1.35" stroke="#2f8fd6" stroke-width="1" fill="#cfe6f7"/></svg>
<svg class="a" style="left:136.6px;top:120.0px;" width="14" height="13.5" viewBox="0 0 14 13.5" fill="none"><path d="M2.6 2.4H0.8V10.6H4" stroke="#555" stroke-width="1"/>
<path d="M4.4 0.7H9.4L12.6 3.9V12.7H4.4Z" stroke="#555" stroke-width="1" fill="#fdfdfe"/><path d="M9.2 0.9V4.1H12.4" stroke="#555" stroke-width=".9"/><path d="M6.6 8.2h3.8M6.6 10.2h3.8" stroke="#777" stroke-width=".8"/></svg>
<svg class="a" style="left:159.8px;top:124.5px;" width="5.8" height="4.1" viewBox="0 0 5.8 4.1" fill="none"><path d="M1 1 L2.9 3.1 L4.8 1" stroke="#3a3a3a" stroke-width="1.0" stroke-linecap="round" stroke-linejoin="round"/></svg>
<svg class="a" style="left:137.0px;top:141.0px;" width="14" height="13" viewBox="0 0 14 13" fill="none"><path d="M8.6 4.2L11.4 0.8a1 1 0 0 1 1.6 1.2L10.6 5.6" stroke="#555" stroke-width="1"/>
<path d="M5.8 3.8L11 7.4 9.8 9 4.6 5.4Z" fill="#555"/>
<path d="M4.4 5.6L9.6 9.2 6.2 12.2 0.8 8.2Z" fill="#f0a23c" stroke="#d9861f" stroke-width=".7"/></svg>
<div class="t" style="left:111.7px;top:162px;font-size:9px;color:#3a3a3a;letter-spacing:-0.460px;">Schowek</div>
<svg class="a" style="left:169.2px;top:162.8px;" width="7" height="7" viewBox="0 0 7 7" fill="none"><path d="M0.6 5.6V0.6" stroke="#8a8a8a" stroke-width="1"/><path d="M0.2 0.6H5.6" stroke="#3a3a3a" stroke-width="1.1"/><path d="M2.8 2.8L5.6 5.4" stroke="#3a3a3a" stroke-width="1"/><path d="M6.6 2.6V6.4H2.8Z" fill="#2b2b2b"/></svg>
<svg class="a" style="left:189.2px;top:97.8px;" width="26" height="23" viewBox="0 0 26 23" fill="none"><rect x="3.2" y="4.6" width="21.4" height="16.6" stroke="#8a8a8a" stroke-width="1.5" fill="#fafbfc"/>
<path d="M3.2 10.4H24.6M12.6 10.4V21.2" stroke="#8a8a8a" stroke-width="1.1"/>
<rect x="0" y="0" width="11" height="9.4" fill="#fdfdfe"/>
<path d="M5.2 0V10.8M0 5.4H10.8" stroke="#3c9b50" stroke-width="1.5"/></svg>
<div class="t" style="left:190.5px;top:128px;font-size:9.6px;color:#2b2b2b;letter-spacing:0.124px;">Nowy</div>
<div class="t" style="left:188.0px;top:141px;font-size:9.6px;color:#2b2b2b;letter-spacing:0.151px;">slajd</div>
<svg class="a" style="left:210.8px;top:143.8px;" width="5.6" height="4.0" viewBox="0 0 5.6 4.0" fill="none"><path d="M1 1 L2.8 3.0 L4.6 1" stroke="#3a3a3a" stroke-width="1.0" stroke-linecap="round" stroke-linejoin="round"/></svg>
<svg class="a" style="left:224.6px;top:99.2px;" width="14" height="11.5" viewBox="0 0 14 11.5" fill="none"><rect x="0.8" y="0.8" width="12.4" height="9.8" stroke="#7a7a7a" stroke-width="1.5" fill="#b9bbbd"/><rect x="2.6" y="4.2" width="3.6" height="3.6" fill="#fff"/><rect x="7.8" y="4.2" width="3.6" height="3.6" fill="#fff"/></svg>
<svg class="a" style="left:242.3px;top:103.0px;" width="5.8" height="4.1" viewBox="0 0 5.8 4.1" fill="none"><path d="M1 1 L2.9 3.1 L4.8 1" stroke="#3a3a3a" stroke-width="1.0" stroke-linecap="round" stroke-linejoin="round"/></svg>
<svg class="a" style="left:224.6px;top:119.6px;" width="14" height="12.5" viewBox="0 0 14 12.5" fill="none"><rect x="1.4" y="2.6" width="11.8" height="9" stroke="#7a7a7a" stroke-width="1.5" fill="#fdfdfe"/><rect x="1.4" y="2.6" width="11.8" height="2" fill="#8a8a8a"/><rect x="-0.4" y="-0.4" width="7" height="6.4" fill="#fdfdfe"/><path d="M1.2 2.6C3.4 1.6 5.8 2.6 6.4 5.4" stroke="#2f8fd6" stroke-width="1.3"/><path d="M3 0.2L0.8 2.7 3.6 4.4" stroke="#2f8fd6" stroke-width="1.2" stroke-linejoin="round"/></svg>
<svg class="a" style="left:224.6px;top:141.4px;" width="13.5" height="13.5" viewBox="0 0 13.5 13.5" fill="none"><rect x="0.6" y="0.5" width="12" height="2.2" fill="#8fd19e" stroke="#5fb574" stroke-width=".6"/><rect x="0.9" y="4.6" width="11.4" height="8" stroke="#7a7a7a" stroke-width="1.5" fill="#fdfdfe"/><rect x="0.9" y="4.6" width="11.4" height="1.8" fill="#8a8a8a"/></svg>
<svg class="a" style="left:242.3px;top:145.9px;" width="5.8" height="4.1" viewBox="0 0 5.8 4.1" fill="none"><path d="M1 1 L2.9 3.1 L4.8 1" stroke="#3a3a3a" stroke-width="1.0" stroke-linecap="round" stroke-linejoin="round"/></svg>
<div class="t" style="left:208.0px;top:162px;font-size:9px;color:#3a3a3a;letter-spacing:-0.336px;">Slajdy</div>
<div class="a" style="left:267.0px;top:95.6px;width:128.6px;height:19.2px;background:#eceef1;border-radius:4px"></div>
<div class="a" style="left:397.4px;top:95.6px;width:38.8px;height:19.2px;background:#eceef1;border-radius:4px"></div>
<svg class="a" style="left:388.2px;top:103.3px;" width="6" height="4.2" viewBox="0 0 6 4.2" fill="none"><path d="M1 1 L3.0 3.2 L5 1" stroke="#a9adb1" stroke-width="1.1" stroke-linecap="round" stroke-linejoin="round"/></svg>
<svg class="a" style="left:427.4px;top:103.3px;" width="6" height="4.2" viewBox="0 0 6 4.2" fill="none"><path d="M1 1 L3.0 3.2 L5 1" stroke="#a9adb1" stroke-width="1.1" stroke-linecap="round" stroke-linejoin="round"/></svg>
<div class="t" style="left:400.5px;top:100px;font-size:9.6px;color:#b9bcc0;letter-spacing:-0.262px;">18+</div>
<div class="t" style="left:274.0px;top:121px;font-size:10.6px;color:#8d9094;font-weight:bold;">B</div>
<div class="t" style="left:296.0px;top:121px;font-size:10.6px;color:#8d9094;font-style:italic;font-family:'Liberation Serif',serif;font-size:12px">I</div>
<div class="t" style="left:316.2px;top:121px;font-size:10.2px;color:#8d9094;">U</div>
<div class="a" style="left:315.8px;top:131.4px;width:7.4px;height:1.0px;background:#8d9094;"></div>
<div class="t" style="left:338.0px;top:121px;font-size:10.8px;color:#8d9094;font-weight:bold;text-shadow:.5px .5px 0 #c8cacc">S</div>
<div class="t" style="left:357.0px;top:122px;font-size:9.6px;color:#9a9da1;letter-spacing:0.661px;">ab</div>
<div class="a" style="left:356.4px;top:127.2px;width:12.8px;height:0.9px;background:#9a9da1;"></div>
<div class="t" style="left:377.4px;top:119px;font-size:9.6px;color:#8d9094;letter-spacing:0.353px;">AV</div>
<svg class="a" style="left:377.6px;top:129.0px;" width="12.6" height="4" viewBox="0 0 12.6 4" fill="none"><path d="M0.6 2H12M2.2 0.4L0.6 2 2.2 3.6M10.4 0.4L12 2 10.4 3.6" stroke="#9a9da1" stroke-width=".8"/></svg>
<svg class="a" style="left:395.0px;top:124.5px;" width="6" height="4.2" viewBox="0 0 6 4.2" fill="none"><path d="M1 1 L3.0 3.2 L5 1" stroke="#a9adb1" stroke-width="1.1" stroke-linecap="round" stroke-linejoin="round"/></svg>
<svg class="a" style="left:270.8px;top:140.6px;" width="14" height="14" viewBox="0 0 14 14" fill="none"><path d="M3.2 8.2L9.4 1.4a1.1 1.1 0 0 1 1.6 0l.8.8a1.1 1.1 0 0 1 0 1.6L5.6 10Z" stroke="#8d9094" stroke-width="1"/><path d="M3.2 8.4L2 10.4h3.4" stroke="#8d9094" stroke-width=".9"/><rect x="0.2" y="11.2" width="13" height="2.6" fill="#a4a7ab"/></svg>
<svg class="a" style="left:289.5px;top:146.3px;" width="6" height="4.2" viewBox="0 0 6 4.2" fill="none"><path d="M1 1 L3.0 3.2 L5 1" stroke="#a9adb1" stroke-width="1.1" stroke-linecap="round" stroke-linejoin="round"/></svg>
<div class="t" style="left:305.8px;top:141px;font-size:11.8px;color:#8d9094;">A</div>
<div class="a" style="left:304.4px;top:151.8px;width:12.8px;height:2.6px;background:#a4a7ab;"></div>
<svg class="a" style="left:323.0px;top:146.3px;" width="6" height="4.2" viewBox="0 0 6 4.2" fill="none"><path d="M1 1 L3.0 3.2 L5 1" stroke="#a9adb1" stroke-width="1.1" stroke-linecap="round" stroke-linejoin="round"/></svg>
<div class="t" style="left:338.0px;top:143px;font-size:10.4px;color:#a0a3a7;letter-spacing:0.139px;">Aa</div>
<svg class="a" style="left:355.0px;top:146.3px;" width="6" height="4.2" viewBox="0 0 6 4.2" fill="none"><path d="M1 1 L3.0 3.2 L5 1" stroke="#a9adb1" stroke-width="1.1" stroke-linecap="round" stroke-linejoin="round"/></svg>
<div class="a" style="left:369.0px;top:138.5px;width:1.0px;height:19.5px;background:#dfe1e4;"></div>
<div class="t" style="left:375.0px;top:142px;font-size:12.6px;color:#8d9094;">A</div>
<svg class="a" style="left:382.8px;top:143.5px;" width="5.2" height="0.19999999999999996" viewBox="0 0 5.2 0.19999999999999996" fill="none"><path d="M1 1 L2.6 -0.8 L4.2 1" stroke="#8d9094" stroke-width="0.9" stroke-linecap="round" stroke-linejoin="round"/></svg>
<div class="t" style="left:398.0px;top:143px;font-size:10.6px;color:#8d9094;">A</div>
<svg class="a" style="left:404.3px;top:142.3px;" width="5" height="3.7" viewBox="0 0 5 3.7" fill="none"><path d="M1 1 L2.5 2.7 L4 1" stroke="#8d9094" stroke-width="0.9" stroke-linecap="round" stroke-linejoin="round"/></svg>
<div class="a" style="left:412.8px;top:138.5px;width:1.0px;height:19.5px;background:#dfe1e4;"></div>
<div class="t" style="left:419.0px;top:141px;font-size:12.2px;color:#8d9094;">A</div>
<svg class="a" style="left:424.2px;top:147.4px;" width="8" height="7" viewBox="0 0 8 7" fill="none"><path d="M3.4 0.6L7.2 3 4.6 6.2 0.8 3.8Z" stroke="#8d9094" stroke-width=".9" fill="#fdfdfe"/><path d="M2.2 2.2L5.9 4.6" stroke="#8d9094" stroke-width=".7"/></svg>
<div class="t" style="left:327.0px;top:162px;font-size:9px;color:#3a3a3a;letter-spacing:-0.377px;">Czcionka</div>
<svg class="a" style="left:432.4px;top:162.8px;" width="7" height="7" viewBox="0 0 7 7" fill="none"><path d="M0.6 5.6V0.6" stroke="#cfd2d5" stroke-width="1"/><path d="M0.2 0.6H5.6" stroke="#b4b7ba" stroke-width="1.1"/><path d="M2.8 2.8L5.6 5.4" stroke="#b4b7ba" stroke-width="1"/><path d="M6.6 2.6V6.4H2.8Z" fill="#b4b7ba"/></svg>
<div class="a" style="left:451.8px;top:100.2px;width:1.6px;height:1.6px;background:#b4b7bb;"></div>
<div class="a" style="left:455.4px;top:100.5px;width:9.2px;height:1.0px;background:#b4b7bb;"></div>
<div class="a" style="left:451.8px;top:104.6px;width:1.6px;height:1.6px;background:#b4b7bb;"></div>
<div class="a" style="left:455.4px;top:104.9px;width:9.2px;height:1.0px;background:#b4b7bb;"></div>
<div class="a" style="left:451.8px;top:109.0px;width:1.6px;height:1.6px;background:#b4b7bb;"></div>
<div class="a" style="left:455.4px;top:109.3px;width:9.2px;height:1.0px;background:#b4b7bb;"></div>
<svg class="a" style="left:471.0px;top:103.3px;" width="6" height="4.2" viewBox="0 0 6 4.2" fill="none"><path d="M1 1 L3.0 3.2 L5 1" stroke="#a9adb1" stroke-width="1.1" stroke-linecap="round" stroke-linejoin="round"/></svg>
<div class="a" style="left:485.4px;top:99.6px;width:1.0px;height:2.6px;background:#c0c3c6;"></div>
<div class="a" style="left:489.0px;top:100.5px;width:9.0px;height:1.0px;background:#b4b7bb;"></div>
<div class="a" style="left:485.4px;top:104.0px;width:1.0px;height:2.6px;background:#c0c3c6;"></div>
<div class="a" style="left:489.0px;top:104.9px;width:9.0px;height:1.0px;background:#b4b7bb;"></div>
<div class="a" style="left:485.4px;top:108.4px;width:1.0px;height:2.6px;background:#c0c3c6;"></div>
<div class="a" style="left:489.0px;top:109.3px;width:9.0px;height:1.0px;background:#b4b7bb;"></div>
<svg class="a" style="left:504.0px;top:103.3px;" width="6" height="4.2" viewBox="0 0 6 4.2" fill="none"><path d="M1 1 L3.0 3.2 L5 1" stroke="#a9adb1" stroke-width="1.1" stroke-linecap="round" stroke-linejoin="round"/></svg>
<div class="a" style="left:515.0px;top:96.5px;width:1.0px;height:18.5px;background:#dfe1e4;"></div>
<svg class="a" style="left:520.6px;top:98.6px;" width="14" height="13" viewBox="0 0 14 13" fill="none"><path d="M2.6 0.8V12.2M0.6 2.8L2.6.8 4.6 2.8M0.6 10.2L2.6 12.2 4.6 10.2" stroke="#b4b7bb" stroke-width=".9"/><path d="M6.6 1.6H13.6M6.6 4.8H13.6M6.6 8H13.6M6.6 11.2H13.6" stroke="#b4b7bb" stroke-width="1"/></svg>
<svg class="a" style="left:538.0px;top:103.3px;" width="6" height="4.2" viewBox="0 0 6 4.2" fill="none"><path d="M1 1 L3.0 3.2 L5 1" stroke="#a9adb1" stroke-width="1.1" stroke-linecap="round" stroke-linejoin="round"/></svg>
<svg class="a" style="left:556.6px;top:98.4px;" width="12" height="13.5" viewBox="0 0 12 13.5" fill="none"><path d="M2.4 0.6V12.6M0.4 10.6L2.4 12.6 4.4 10.6" stroke="#8d9094" stroke-width="1"/><path d="M8.6 8.4V12.8M6.8 11L8.6 12.8 10.4 11" stroke="#b4b7bb" stroke-width=".9"/></svg>
<div class="t" style="left:561.2px;top:99px;font-size:7.6px;color:#b4b7bb;">A</div>
<svg class="a" style="left:573.0px;top:103.3px;" width="6" height="4.2" viewBox="0 0 6 4.2" fill="none"><path d="M1 1 L3.0 3.2 L5 1" stroke="#a9adb1" stroke-width="1.1" stroke-linecap="round" stroke-linejoin="round"/></svg>
<svg class="a" style="left:452.5px;top:120.4px;" width="12.5" height="11.5" viewBox="0 0 12.5 11.5" fill="none"><path d="M0 .6H12.4M5.4 3.9H12.4M5.4 7.2H12.4M0 10.6H12.4" stroke="#a9adb1" stroke-width="1"/><path d="M4 5.5H0.6M2 4L.5 5.5 2 7" stroke="#a9adb1" stroke-width=".8"/></svg>
<svg class="a" style="left:474.0px;top:120.4px;" width="12.5" height="11.5" viewBox="0 0 12.5 11.5" fill="none"><path d="M0 .6H12.4M5.4 3.9H12.4M5.4 7.2H12.4M0 10.6H12.4" stroke="#a9adb1" stroke-width="1"/><path d="M0.4 5.5H3.8M2.4 4L3.9 5.5 2.4 7" stroke="#a9adb1" stroke-width=".8"/></svg>
<div class="a" style="left:491.2px;top:117.5px;width:1.0px;height:19.0px;background:#dfe1e4;"></div>
<div class="a" style="left:498.0px;top:122.6px;width:4.4px;height:1.0px;background:#c6c9cc;"></div>
<div class="a" style="left:503.8px;top:122.6px;width:4.4px;height:1.0px;background:#c6c9cc;"></div>
<div class="a" style="left:498.0px;top:125.8px;width:4.4px;height:1.0px;background:#c6c9cc;"></div>
<div class="a" style="left:503.8px;top:125.8px;width:4.4px;height:1.0px;background:#c6c9cc;"></div>
<div class="a" style="left:498.0px;top:129.0px;width:4.4px;height:1.0px;background:#c6c9cc;"></div>
<div class="a" style="left:503.8px;top:129.0px;width:4.4px;height:1.0px;background:#c6c9cc;"></div>
<svg class="a" style="left:514.0px;top:124.5px;" width="6" height="4.2" viewBox="0 0 6 4.2" fill="none"><path d="M1 1 L3.0 3.2 L5 1" stroke="#a9adb1" stroke-width="1.1" stroke-linecap="round" stroke-linejoin="round"/></svg>
<svg class="a" style="left:555.0px;top:119.2px;" width="14.5" height="14" viewBox="0 0 14.5 14" fill="none"><path d="M3.6 2.6H0.6V11.4H3.6M10.8 2.6H13.8V11.4H10.8" stroke="#b4b7bb" stroke-width="1"/><path d="M7.2 0.6V13.2M5.6 2.2L7.2.6 8.8 2.2M5.6 11.6L7.2 13.2 8.8 11.6M3.4 7H11" stroke="#b4b7bb" stroke-width=".8"/></svg>
<svg class="a" style="left:573.0px;top:124.5px;" width="6" height="4.2" viewBox="0 0 6 4.2" fill="none"><path d="M1 1 L3.0 3.2 L5 1" stroke="#a9adb1" stroke-width="1.1" stroke-linecap="round" stroke-linejoin="round"/></svg>
<div class="a" style="left:452.5px;top:142.2px;width:11.6px;height:1.0px;background:#a9adb1;"></div>
<div class="a" style="left:452.5px;top:145.6px;width:8.4px;height:1.0px;background:#a9adb1;"></div>
<div class="a" style="left:452.5px;top:149.0px;width:11.6px;height:1.0px;background:#a9adb1;"></div>
<div class="a" style="left:452.5px;top:152.4px;width:8.4px;height:1.0px;background:#a9adb1;"></div>
<div class="a" style="left:474.0px;top:142.2px;width:11.6px;height:1.0px;background:#a9adb1;"></div>
<div class="a" style="left:475.8px;top:145.6px;width:8.0px;height:1.0px;background:#a9adb1;"></div>
<div class="a" style="left:474.0px;top:149.0px;width:11.6px;height:1.0px;background:#a9adb1;"></div>
<div class="a" style="left:475.8px;top:152.4px;width:8.0px;height:1.0px;background:#a9adb1;"></div>
<div class="a" style="left:495.2px;top:142.2px;width:11.6px;height:1.0px;background:#a9adb1;"></div>
<div class="a" style="left:498.4px;top:145.6px;width:8.4px;height:1.0px;background:#a9adb1;"></div>
<div class="a" style="left:495.2px;top:149.0px;width:11.6px;height:1.0px;background:#a9adb1;"></div>
<div class="a" style="left:498.4px;top:152.4px;width:8.4px;height:1.0px;background:#a9adb1;"></div>
<div class="a" style="left:516.6px;top:142.2px;width:11.6px;height:1.0px;background:#a9adb1;"></div>
<div class="a" style="left:516.6px;top:145.6px;width:11.6px;height:1.0px;background:#a9adb1;"></div>
<div class="a" style="left:516.6px;top:149.0px;width:11.6px;height:1.0px;background:#a9adb1;"></div>
<div class="a" style="left:516.6px;top:152.4px;width:11.6px;height:1.0px;background:#a9adb1;"></div>
<svg class="a" style="left:555.6px;top:141.6px;" width="14" height="12" viewBox="0 0 14 12" fill="none"><path d="M0.6 0.8H7.4L10.2 3.2H7.2L4.8 5.8H0.6L2.8 3.3Z" stroke="#a9adb1" stroke-width=".9" fill="#d6d8db"/><rect x="5.4" y="6" width="8" height="5.2" stroke="#a9adb1" stroke-width="1" fill="#fdfdfe"/><path d="M6.8 8.6H12" stroke="#a9adb1" stroke-width=".9"/></svg>
<svg class="a" style="left:573.0px;top:146.1px;" width="6" height="4.2" viewBox="0 0 6 4.2" fill="none"><path d="M1 1 L3.0 3.2 L5 1" stroke="#a9adb1" stroke-width="1.1" stroke-linecap="round" stroke-linejoin="round"/></svg>
<div class="t" style="left:498.0px;top:162px;font-size:9px;color:#3a3a3a;letter-spacing:-0.219px;">Akapit</div>
<svg class="a" style="left:581.6px;top:162.8px;" width="7" height="7" viewBox="0 0 7 7" fill="none"><path d="M0.6 5.6V0.6" stroke="#cfd2d5" stroke-width="1"/><path d="M0.2 0.6H5.6" stroke="#b4b7ba" stroke-width="1.1"/><path d="M2.8 2.8L5.6 5.4" stroke="#b4b7ba" stroke-width="1"/><path d="M6.6 2.6V6.4H2.8Z" fill="#b4b7ba"/></svg>
<svg class="a" style="left:604.6px;top:98.6px;" width="25" height="25" viewBox="0 0 25 25" fill="none"><rect x="0.8" y="0.8" width="15.4" height="15.4" fill="#6aaae4" stroke="#3b86cf" stroke-width="1"/><circle cx="15.6" cy="15.2" r="7.8" fill="#fdfdfe" stroke="#444" stroke-width="1.1"/></svg>
<div class="t" style="left:600.5px;top:128px;font-size:9.6px;color:#2b2b2b;letter-spacing:-0.101px;">Kształty</div>
<svg class="a" style="left:613.1px;top:142.9px;" width="5.8" height="4.1" viewBox="0 0 5.8 4.1" fill="none"><path d="M1 1 L2.9 3.1 L4.8 1" stroke="#3a3a3a" stroke-width="1.0" stroke-linecap="round" stroke-linejoin="round"/></svg>
<svg class="a" style="left:648.0px;top:98.6px;" width="24.5" height="24.5" viewBox="0 0 24.5 24.5" fill="none"><rect x="4.4" y="3.6" width="15.4" height="15.8" fill="#f8d08e" stroke="#e9953a" stroke-width="1.1"/><rect x="0.7" y="0.7" width="9" height="9" fill="#fdfdfe" stroke="#555" stroke-width="1.1"/><rect x="14" y="14" width="9.4" height="9.4" fill="#fdfdfe" stroke="#555" stroke-width="1.1"/></svg>
<div class="t" style="left:640.3px;top:128px;font-size:9.6px;color:#2b2b2b;letter-spacing:-0.305px;">Rozmieść</div>
<svg class="a" style="left:656.6px;top:142.9px;" width="5.8" height="4.1" viewBox="0 0 5.8 4.1" fill="none"><path d="M1 1 L2.9 3.1 L4.8 1" stroke="#3a3a3a" stroke-width="1.0" stroke-linecap="round" stroke-linejoin="round"/></svg>
<svg class="a" style="left:690.0px;top:98.6px;" width="25" height="24" viewBox="0 0 25 24" fill="none"><rect x="0.7" y="0.7" width="22" height="21.4" rx="1.4" stroke="#c4c7ca" stroke-width="1.3" fill="#f3f4f6"/><path d="M23.6 9.6L17.4 18.4" stroke="#b4b7bb" stroke-width="2" stroke-linecap="round"/><path d="M17.6 17.4c-2.6-.4-3.2 2.2-6.4 3.6 2.6 1.4 6.8.6 7.4-2.2Z" fill="#b4b7bb"/></svg>
<div class="t" style="left:686.7px;top:128px;font-size:9.6px;color:#bdbfc2;letter-spacing:-0.331px;">Szybkie</div>
<div class="t" style="left:688.0px;top:141px;font-size:9.6px;color:#bdbfc2;letter-spacing:0.052px;">style</div>
<svg class="a" style="left:709.6px;top:143.3px;" width="6" height="4.2" viewBox="0 0 6 4.2" fill="none"><path d="M1 1 L3.0 3.2 L5 1" stroke="#c4c7ca" stroke-width="1.1" stroke-linecap="round" stroke-linejoin="round"/></svg>
<svg class="a" style="left:726.0px;top:98.6px;" width="13" height="13.5" viewBox="0 0 13 13.5" fill="none"><path d="M3 6L7.4 1l4 3.4L7.6 8.8Z" stroke="#b4b7bb" stroke-width="1" fill="#fdfdfe"/><path d="M6.4 0.4v3.2" stroke="#b4b7bb" stroke-width=".9"/><path d="M11.8 5.4c.8 1.2.8 2 0 2.4" stroke="#b4b7bb" stroke-width=".9"/><rect x="0" y="10.6" width="12.6" height="2.6" fill="#c0c3c6"/></svg>
<svg class="a" style="left:748.2px;top:103.3px;" width="6" height="4.2" viewBox="0 0 6 4.2" fill="none"><path d="M1 1 L3.0 3.2 L5 1" stroke="#c4c7ca" stroke-width="1.1" stroke-linecap="round" stroke-linejoin="round"/></svg>
<svg class="a" style="left:726.0px;top:120.6px;" width="13" height="12.5" viewBox="0 0 13 12.5" fill="none"><path d="M5 0.8H0.8V8H4" stroke="#b4b7bb" stroke-width=".9"/><path d="M5.4 6.6L10.6 1a.9.9 0 0 1 1.5 1.2L7 7.8 4.6 8.6Z" stroke="#b4b7bb" stroke-width=".9"/><rect x="0" y="9.8" width="12.6" height="2.4" fill="#c0c3c6"/></svg>
<svg class="a" style="left:748.2px;top:124.5px;" width="6" height="4.2" viewBox="0 0 6 4.2" fill="none"><path d="M1 1 L3.0 3.2 L5 1" stroke="#c4c7ca" stroke-width="1.1" stroke-linecap="round" stroke-linejoin="round"/></svg>
<svg class="a" style="left:726.0px;top:142.6px;" width="13" height="11" viewBox="0 0 13 11" fill="none"><path d="M3.6 0.8H11.2L9.6 7H1.2Z" fill="#eceef0" stroke="#a9adb1" stroke-width="1" stroke-linejoin="round"/><path d="M1.2 7v1.8a1.2 1.2 0 0 0 1.2 1.2H8.6L9.6 7" fill="#b4b7bb" stroke="#a9adb1" stroke-width=".8"/><path d="M11.2.8L11 3.6 9 10" stroke="#a9adb1" stroke-width=".8"/></svg>
<svg class="a" style="left:743.2px;top:146.1px;" width="6" height="4.2" viewBox="0 0 6 4.2" fill="none"><path d="M1 1 L3.0 3.2 L5 1" stroke="#c4c7ca" stroke-width="1.1" stroke-linecap="round" stroke-linejoin="round"/></svg>
<div class="t" style="left:652.0px;top:162px;font-size:9px;color:#3a3a3a;letter-spacing:-0.336px;">Rysowanie</div>
<svg class="a" style="left:757.8px;top:162.8px;" width="7" height="7" viewBox="0 0 7 7" fill="none"><path d="M0.6 5.6V0.6" stroke="#cfd2d5" stroke-width="1"/><path d="M0.2 0.6H5.6" stroke="#b4b7ba" stroke-width="1.1"/><path d="M2.8 2.8L5.6 5.4" stroke="#b4b7ba" stroke-width="1"/><path d="M6.6 2.6V6.4H2.8Z" fill="#b4b7ba"/></svg>
<svg class="a" style="left:786.0px;top:96.6px;" width="27" height="26" viewBox="0 0 27 26" fill="none"><circle cx="16.6" cy="9.2" r="8.2" stroke="#555" stroke-width="1.1" fill="#f9fafb"/><path d="M11 15.2L1.4 24.6" stroke="#555" stroke-width="1.2" stroke-linecap="round"/></svg>
<div class="t" style="left:775.3px;top:126px;font-size:9.6px;color:#2b2b2b;letter-spacing:-0.043px;">Edytowanie</div>
<svg class="a" style="left:796.1px;top:141.3px;" width="5.8" height="4.1" viewBox="0 0 5.8 4.1" fill="none"><path d="M1 1 L2.9 3.1 L4.8 1" stroke="#3a3a3a" stroke-width="1.0" stroke-linecap="round" stroke-linejoin="round"/></svg>
<svg class="a" style="left:852.0px;top:98.0px;" width="18" height="25.5" viewBox="0 0 18 25.5" fill="none"><rect x="4.8" y="0.8" width="8.6" height="16.6" rx="4.3" fill="#5aa1e0" stroke="#2f7fc9" stroke-width="1"/><path d="M1 11.4a8 8 0 0 0 16 0" stroke="#555" stroke-width="1.1"/><path d="M9 19.6V24.6" stroke="#555" stroke-width="1.1"/></svg>
<div class="t" style="left:841.3px;top:128px;font-size:9.6px;color:#2b2b2b;letter-spacing:0.252px;">Dyktafon</div>
<svg class="a" style="left:857.4px;top:144.1px;" width="5.8" height="4.1" viewBox="0 0 5.8 4.1" fill="none"><path d="M1 1 L2.9 3.1 L4.8 1" stroke="#3a3a3a" stroke-width="1.0" stroke-linecap="round" stroke-linejoin="round"/></svg>
<div class="t" style="left:852.0px;top:162px;font-size:9px;color:#3a3a3a;letter-spacing:-0.326px;">Głos</div>
<svg class="a" style="left:905.6px;top:97.4px;" width="23" height="25.5" viewBox="0 0 23 25.5" fill="none"><path d="M12 2.8H0.7V24.2H17.4V12.6" stroke="#2f8fd6" stroke-width="1.1" fill="#fbfdfe"/><g transform="translate(21.6,1.8) rotate(134)"><rect x="8.6" y="-2.1" width="13.4" height="4.2" rx=".9" fill="#b4d9f4" stroke="#2f8fd6" stroke-width="1"/><rect x="11" y="-.55" width="9" height="1.1" fill="#5aa9e2"/><rect x="5.6" y="-3.3" width="3.4" height="6.6" fill="#2f8fd6"/><rect x="0.4" y="-2.5" width="5.2" height="5" fill="#fdfdfe" stroke="#2f8fd6" stroke-width="1"/></g></svg>
<div class="t" style="left:898.3px;top:128px;font-size:9.6px;color:#2b2b2b;letter-spacing:-0.121px;">Czułość</div>
<svg class="a" style="left:911.7px;top:142.9px;" width="5.8" height="4.1" viewBox="0 0 5.8 4.1" fill="none"><path d="M1 1 L2.9 3.1 L4.8 1" stroke="#3a3a3a" stroke-width="1.0" stroke-linecap="round" stroke-linejoin="round"/></svg>
<div class="t" style="left:898.0px;top:162px;font-size:9px;color:#3a3a3a;letter-spacing:-0.491px;">Poufność</div>
<svg class="a" style="left:954.7px;top:98.6px;" width="24" height="24.5" viewBox="0 0 24 24.5" fill="none"><rect x="0.6" y="0.6" width="22.6" height="22.8" stroke="#d9663d" stroke-width="1" fill="#fbefe9"/><rect x="3.6" y="3.6" width="7.2" height="7.2" stroke="#d9663d" stroke-width="1.1" fill="#fff"/><rect x="13" y="3.6" width="7.2" height="7.2" stroke="#d9663d" stroke-width="1.1" fill="#fff"/><rect x="3.6" y="13" width="7.2" height="7.2" stroke="#d9663d" stroke-width="1.1" fill="#fff"/><rect x="13" y="13" width="7.2" height="7.2" stroke="#d9663d" stroke-width="1.1" fill="#fff"/></svg>
<div class="t" style="left:949.8px;top:128px;font-size:9.6px;color:#2b2b2b;letter-spacing:0.293px;">Dodatki</div>
<div class="t" style="left:951.4px;top:162px;font-size:9px;color:#3a3a3a;letter-spacing:-0.274px;">Dodatki</div>
<svg class="a" style="left:1010.0px;top:97.0px;" width="26" height="24" viewBox="0 0 26 24" fill="none"><rect x="2.6" y="5" width="22" height="17.4" stroke="#666" stroke-width="1.5" fill="#faf3f3"/><path d="M2.6 9.4H24.6M17.8 9.4V22.4" stroke="#666" stroke-width="1.1"/><path d="M5.6 0H10.8L8.4 5.6H12L3 16.6 5.4 8.8H1.6Z" fill="#f7b04a" stroke="#e6902a" stroke-width=".6" stroke-linejoin="round"/></svg>
<div class="t" style="left:1001.8px;top:128px;font-size:9.6px;color:#2b2b2b;letter-spacing:0.048px;">Projektant</div>
<svg class="a" style="left:1109.5px;top:160.0px;" width="9" height="5.6" viewBox="0 0 9 5.6" fill="none"><path d="M1 1 L4.5 4.6 L8 1" stroke="#3a3a3a" stroke-width="1.1" stroke-linecap="round" stroke-linejoin="round"/></svg>
</div></body></html>
